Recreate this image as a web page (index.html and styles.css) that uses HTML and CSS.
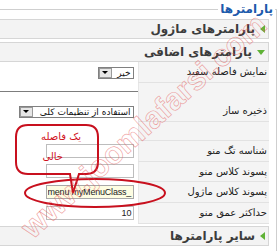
FILE: index.html
```html
<!DOCTYPE html>
<html lang="fa" dir="rtl">
<head>
    <meta charset="UTF-8">
    <meta name="viewport" content="width=device-width, initial-scale=1.0">
    <title>پارامترها</title>
    <link rel="stylesheet" href="styles.css">
</head>

<body>
    <div class="page">
        <fieldset class="params">
            <legend>پارامترها</legend>
            <div class="pane-head closed"><span class="arrow"></span>پارامترهای ماژول</div>
            <div class="pane-head open"><span class="arrow"></span>پارامترهای اضافی</div>

            <table class="paramlist">
                <tr class="row">
                    <td class="key">نمایش فاصله سفید</td>
                    <td class="value">
                        <span class="select small"><span class="sel-text">خیر</span><span class="sel-btn"></span></span>
                    </td>
                </tr>
                <tr class="spacer">
                    <td class="key blank"></td>
                    <td class="value"><div class="rule"></div></td>
                </tr>
                <tr class="row">
                    <td class="key">ذخیره ساز</td>
                    <td class="value">
                        <span class="select wide"><span class="sel-text">استفاده از تنظیمات کلی</span><span class="sel-btn"></span></span>
                    </td>
                </tr>
                <tr class="empty">
                    <td class="key"></td>
                    <td class="value"></td>
                </tr>
                <tr class="row tall">
                    <td class="key">شناسه تگ منو</td>
                    <td class="value"><input class="text" type="text" value=""></td>
                </tr>
                <tr class="row">
                    <td class="key">پسوند کلاس منو</td>
                    <td class="value"><input class="text" type="text" value=""></td>
                </tr>
                <tr class="row tall">
                    <td class="key">پسوند کلاس ماژول</td>
                    <td class="value"><input class="text focus" type="text" dir="ltr" value="menu myMenuClass_"></td>
                </tr>
                <tr class="row tall">
                    <td class="key">حداکثر عمق منو</td>
                    <td class="value"><input class="text" type="text" value="10"></td>
                </tr>
            </table>

            <div class="pane-head closed last"><span class="arrow"></span>سایر پارامترها</div>
        </fieldset>

        <!-- توضیح روی تصویر -->
        <svg class="marks" width="280" height="251" viewBox="0 0 280 251">
            <path d="M28 125 H86 Q98 125 98 137 V162 Q98 174 86 174 H79 L73 193 L70 174 H28 Q16 174 16 162 V137 Q16 125 28 125 Z"
                fill="none" stroke="#c8101e" stroke-width="2" />
            <ellipse cx="95" cy="193" rx="70" ry="14" fill="none" stroke="#c8101e" stroke-width="2" />
        </svg>
        <div class="bubble">
            <span class="line">یک فاصله</span>
            <span class="line second">خالی</span>
        </div>
        <div class="watermark" dir="ltr">www.joomlafarsi.com</div>
    </div>
</body>

</html>
```

FILE: styles.css
```css
* {
    margin: 0;
    padding: 0;
    box-sizing: border-box;
}

html,
body {
    width: 280px;
    height: 251px;
    overflow: hidden;
    background-color: #fff;
}

body {
    font-family: "Liberation Sans", "DejaVu Sans", sans-serif;
    font-size: 11px;
    color: #333;
}

.page {
    position: relative;
    height: 251px;
}

.params {
    margin: 0 3px 0 -12px;
    padding: 0 7px 6px 0;
    border: 1px solid #cfcfcf;
}

.params legend {
    margin-right: -6px;
    padding: 0 2px;
    font-family: "DejaVu Sans", sans-serif;
    font-size: 12px;
    line-height: 18px;
    font-weight: bold;
    color: #1d5aab;
}

.pane-head {
    display: flex;
    align-items: center;
    gap: 5px;
    height: 20px;
    margin-top: 1px;
    padding-right: 3px;
    border: 1px solid #d6d6d6;
    background-color: #f3f3f3;
    font-family: "DejaVu Sans", sans-serif;
    font-size: 12px;
    font-weight: bold;
    color: #3c3c3c;
}

.pane-head + .pane-head {
    margin-top: 3px;
}

.pane-head.last {
    margin-top: 2px;
}

.arrow {
    width: 0;
    height: 0;
}

.closed .arrow {
    border-top: 4px solid transparent;
    border-bottom: 4px solid transparent;
    border-right: 5px solid #5fb236;
}

.open .arrow {
    border-left: 4px solid transparent;
    border-right: 4px solid transparent;
    border-top: 5px solid #5fb236;
}

.paramlist {
    width: 100%;
    border-collapse: collapse;
}

.paramlist td {
    padding: 0;
    vertical-align: middle;
}

.paramlist .row {
    height: 20px;
}

.paramlist .row.tall {
    height: 21px;
}

.paramlist .spacer,
.paramlist .empty {
    height: 19px;
}

.key {
    width: 131px;
    padding-right: 2px !important;
    background-color: #f4f4f4;
    border-bottom: 1px solid #e2e2e2;
    border-left: 1px solid #e6e6e6;
    font-family: "DejaVu Sans", sans-serif;
    font-size: 10px;
    color: #222;
    text-align: right;
    white-space: nowrap;
}

.key.blank {
    border-bottom: none;
}

.value {
    padding-right: 4px !important;
    text-align: right;
}

.rule {
    height: 1px;
    margin-right: -4px;
    background-color: #7d7d7d;
}

.select {
    display: inline-flex;
    height: 12px;
    border: 1px solid #808080;
    background-color: #fff;
    vertical-align: middle;
}

.select.small {
    width: 36px;
}

.select.wide {
    width: 115px;
}

.sel-text {
    flex: 1;
    padding: 0 2px;
    font-family: "DejaVu Sans", sans-serif;
    font-size: 9px;
    line-height: 10px;
    color: #111;
    white-space: nowrap;
    overflow: hidden;
}

.sel-btn {
    display: flex;
    align-items: center;
    justify-content: center;
    width: 13px;
    border: 1px solid #9a9a9a;
    background-color: #e6e6e6;
}

.sel-btn::after {
    content: "";
    border-left: 3px solid transparent;
    border-right: 3px solid transparent;
    border-top: 3px solid #000;
}

.text {
    display: inline-block;
    width: 88px;
    height: 14px;
    padding: 0 1px 0 2px;
    border: 1px solid #bdbdbd;
    background-color: #fff;
    font-family: "Liberation Sans", sans-serif;
    font-size: 9px;
    line-height: 12px;
    color: #222;
    vertical-align: middle;
    outline: none;
}

.text.focus {
    border-color: #a8a8a8;
    background-color: #fdfde2;
    text-align: left;
    letter-spacing: -0.2px;
    padding-left: 1px;
}

.marks {
    position: absolute;
    top: 0;
    left: 0;
    pointer-events: none;
}

.bubble {
    position: absolute;
    top: 131px;
    left: 16px;
    width: 82px;
    display: flex;
    flex-direction: column;
    gap: 8px;
    padding-right: 17px;
    font-family: "DejaVu Sans", sans-serif;
    font-size: 10px;
    line-height: 12px;
    color: #d0101c;
}

.bubble .second {
    margin-right: 18px;
}

.watermark {
    position: absolute;
    top: 126px;
    left: 144px;
    transform: translate(-50%, -50%) rotate(-42deg);
    font-family: "Liberation Sans", sans-serif;
    font-size: 31px;
    font-weight: bold;
    white-space: nowrap;
    color: transparent;
    -webkit-text-stroke: 0.7px rgba(228, 90, 90, 0.55);
    pointer-events: none;
}
```
